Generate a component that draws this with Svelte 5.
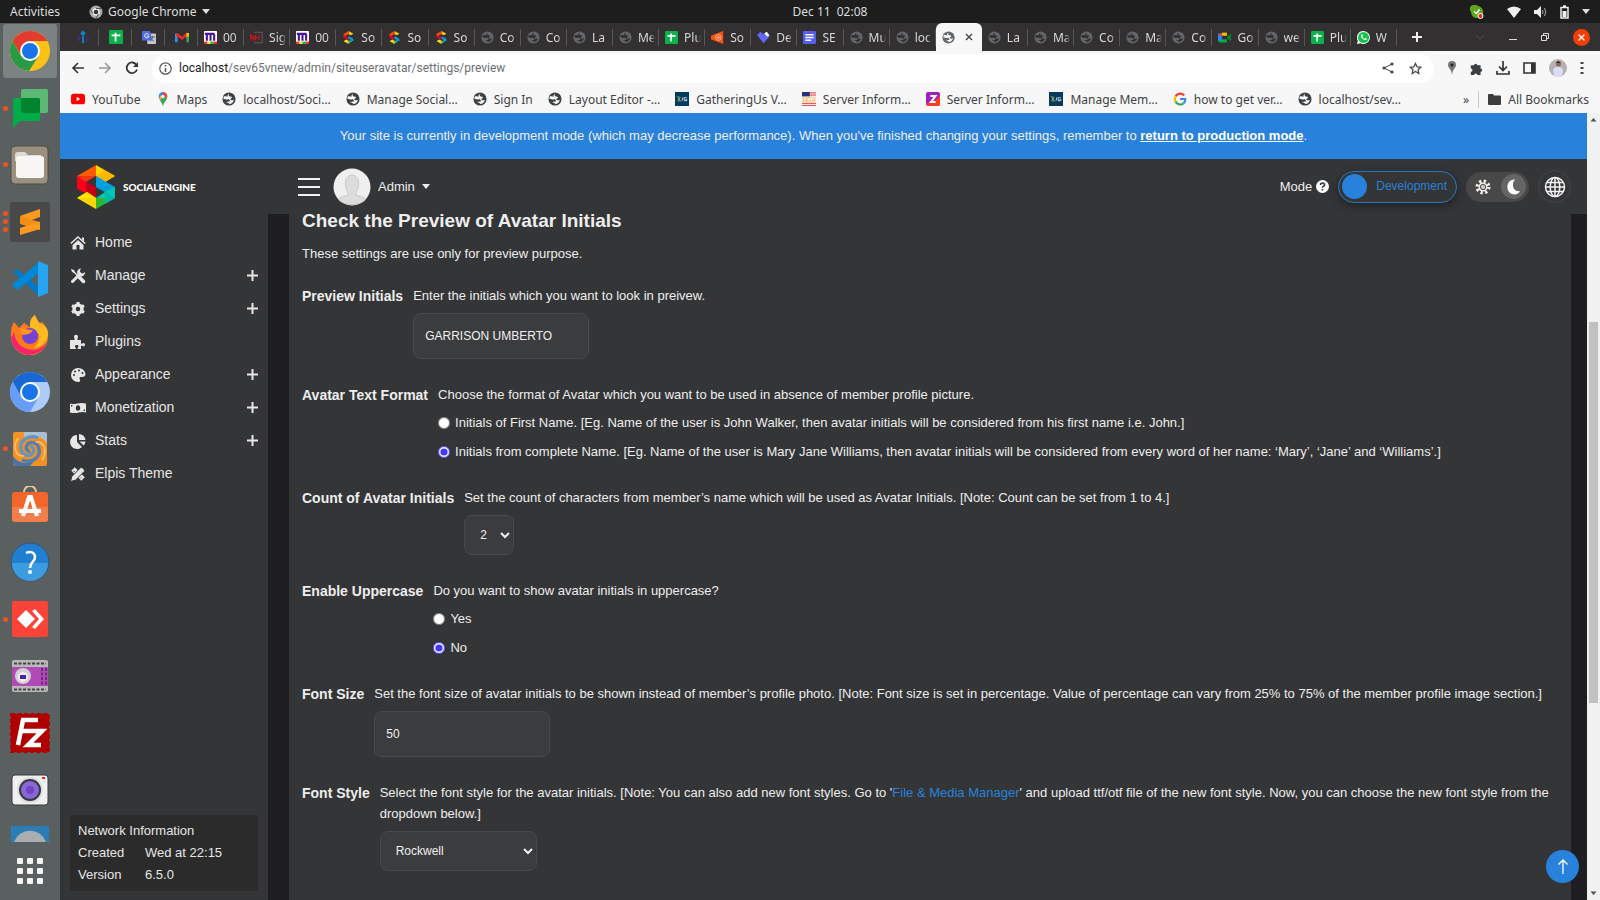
<script>
  const pinned = ["arrows", "sheets", "translate", "gmail"];
  const tabs = [
    { icon: "monday", title: "00" },
    { icon: "nh", title: "Sig" },
    { icon: "monday", title: "00" },
    { icon: "se", title: "So" },
    { icon: "se", title: "So" },
    { icon: "se", title: "So" },
    { icon: "globe", title: "Co" },
    { icon: "globe", title: "Co" },
    { icon: "globe", title: "La" },
    { icon: "globe", title: "Me" },
    { icon: "sheets", title: "Plu" },
    { icon: "orange", title: "So" },
    { icon: "heart", title: "De" },
    { icon: "docs", title: "SE" },
    { icon: "globe", title: "Mu" },
    { icon: "globe", title: "loc" },
    { icon: "globe", title: "", active: true },
    { icon: "globe", title: "La" },
    { icon: "globe", title: "Ma" },
    { icon: "globe", title: "Co" },
    { icon: "globe", title: "Ma" },
    { icon: "globe", title: "Co" },
    { icon: "meet", title: "Go" },
    { icon: "globe", title: "we" },
    { icon: "sheets", title: "Plu" },
    { icon: "whatsapp", title: "W" },
  ];
  const bookmarks = [
    { icon: "youtube", title: "YouTube" },
    { icon: "maps", title: "Maps" },
    { icon: "globe", title: "localhost/Soci…" },
    { icon: "globe", title: "Manage Social…" },
    { icon: "globe", title: "Sign In" },
    { icon: "globe", title: "Layout Editor -…" },
    { icon: "gathering", title: "GatheringUs V…" },
    { icon: "php", title: "Server Inform…" },
    { icon: "zend", title: "Server Inform…" },
    { icon: "gathering", title: "Manage Mem…" },
    { icon: "google", title: "how to get ver…" },
    { icon: "globe", title: "localhost/sev…" },
  ];
  const dock = [
    { icon: "chrome", label: "Google Chrome", dots: 2, active: true },
    { icon: "chat", label: "Chat", dots: 1 },
    { icon: "files", label: "Files", dots: 1 },
    { icon: "sublime", label: "Sublime Text", dots: 3 },
    { icon: "code", label: "Visual Studio Code", dots: 0 },
    { icon: "firefox", label: "Firefox", dots: 0 },
    { icon: "chromium", label: "Chromium", dots: 0 },
    { icon: "swirl", label: "Meld", dots: 1 },
    { icon: "software", label: "Ubuntu Software", dots: 0 },
    { icon: "help", label: "Help", dots: 0 },
    { icon: "anydesk", label: "AnyDesk", dots: 1 },
    { icon: "recorder", label: "Screen Recorder", dots: 0 },
    { icon: "filezilla", label: "FileZilla", dots: 0 },
    { icon: "camera", label: "Camera", dots: 0 },
  ];
  const menu = [
    { icon: "home", label: "Home" },
    { icon: "tools", label: "Manage", more: true },
    { icon: "gear", label: "Settings", more: true },
    { icon: "puzzle", label: "Plugins" },
    { icon: "palette", label: "Appearance", more: true },
    { icon: "money", label: "Monetization", more: true },
    { icon: "pie", label: "Stats", more: true },
    { icon: "pencil", label: "Elpis Theme" },
  ];

  let initials = $state("GARRISON UMBERTO");
  let format = $state("full");
  let count = $state("2");
  let uppercase = $state("no");
  let fontSize = $state("50");
  let fontStyle = $state("Rockwell");
</script>

{#snippet favicon(name)}
  <svg class="favicon" viewBox="0 0 16 16" aria-hidden="true">
    {#if name === "globe"}
      <circle cx="8" cy="8" r="7.5" fill="currentColor" />
      <path class="land" d="M2 5.200c1.200-.6 3.500-.6 4.800.2 1.600 1 1.800 2.800-.2 3.200C4.500 9 4 7.800 1.800 8c-.2-1 0-2 .2-2.800zM8.500 2.200c-1 .9-1.300 1.900-.2 2.600 1.300.8 2.600.1 3 1.300.4 1.300-1.700 1.200-1.700 2.300 0 1.500 2.300 1 4 .6C13 11.500 11 13.800 7.800 13.800c.8-1.500-.8-1.700-3.300-2.200 2-.8 5-.4 4.800-1.600-.2-.9-1.600-.9-1.500-2.300.1-1.300-1.300-2.200-1.600-3.200-.2-.9.900-1.900 2.300-2.300z" />
    {:else if name === "arrows"}
      <path d="M8 15V3M5.500 5L8 1.800 10.500 5" fill="none" stroke="#1b80c4" stroke-width="2" />
      <path d="M5 6v8L1 10.500V9zM11 6v8l4-3.500V9z" fill="#3b2f78" />
    {:else if name === "sheets"}
      <rect width="16" height="16" rx="1.500" fill="#0db14b" />
      <path d="M3 6h10M7.500 3v10" stroke="#fff" stroke-width="2" />
    {:else if name === "translate"}
      <rect x="6" y="4" width="10" height="12" rx="1" fill="#c5c8ce" />
      <path d="M9 8h6M12 7v1c0 2-1.500 4-3 5m1-4c1 2 2.500 3.500 4 4" stroke="#556" stroke-width="1" fill="none" />
      <path d="M1 1h8l3 11H1a1 1 0 0 1-1-1V2a1 1 0 0 1 1-1z" fill="#4f6be0" />
      <path d="M7.500 5A2.500 2.500 0 1 0 8 7H5.500" stroke="#fff" fill="none" />
    {:else if name === "gmail"}
      <path d="M1.500 14V4" stroke="#4285f4" stroke-width="3" />
      <path d="M14.500 14V4" stroke="#34a853" stroke-width="3" />
      <path d="M1.500 4.500L8 9.500l6.500-5" stroke="#ea2a1f" stroke-width="3.200" fill="none" />
      <path d="M13 3.500h3v3l-3 2z" fill="#fbbc04" />
    {:else if name === "monday"}
      <rect width="16" height="16" rx="1" fill="#fff" />
      <path d="M3.500 12V4M8 12V4M12.500 12V4M1 3.500h12" stroke="#4b159b" stroke-width="2.600" />
      <path d="M0 13h4v3H0z" fill="#e33" /><path d="M4 13h4v3H4z" fill="#fd2" />
      <path d="M8 13h4v3H8z" fill="#1b4" /><path d="M12 13h4v3h-4z" fill="#e33" />
    {:else if name === "nh"}
      <path d="M5 1.500h10v13H5" fill="none" stroke="#666" />
      <path d="M1 11V5l4 6V5M7 5v6M7 8h4M11 5v6" fill="none" stroke="#c6171d" stroke-width="1.500" />
    {:else if name === "se"}
      <path d="M8 0l6 3.500-3 1.800L8 4z" fill="#fc0" /><path d="M8 0L2 3.500v4L8 4z" fill="#f44a10" />
      <path d="M2 5l6 3v3.500L2 8z" fill="#e4002b" /><path d="M8 6l6 3.500v3L8 9.500z" fill="#009fe3" />
      <path d="M14 11l-6 5v-4z" fill="#1eb9a4" /><path d="M2 12.500l3-2 3 1.500v4z" fill="#fd0" />
    {:else if name === "orange"}
      <path d="M15 0v16L2 11a3 3 0 0 1 0-6z" fill="#f9500c" />
      <circle cx="9" cy="8" r="3.500" fill="none" stroke="#ffd6bd" /><path d="M7 8h4M9 6.500v3" stroke="#ffd6bd" />
    {:else if name === "heart"}
      <path d="M0 5l4-4 4 3 3-3 5 5-8 9z" fill="#6167f5" /><path d="M9 3l3-2 3 4-2 2z" fill="#fff" />
    {:else if name === "docs"}
      <rect width="16" height="16" rx="1.500" fill="#5561ee" />
      <path d="M3 4.500h10M3 8h10M3 11.500h7" stroke="#fff" stroke-width="1.800" />
    {:else if name === "meet"}
      <path d="M0 3h5v10H0z" fill="#2684fc" /><path d="M5 2h6v4H5z" fill="#ffba00" />
      <path d="M0 6l5-4v4z" fill="#ea4335" /><path d="M5 10h6v4H2l-2-2z" fill="#00ac47" />
      <path d="M5 6h6v4H5z" fill="#323030" /><path d="M11 7l5-4v10l-5-4z" fill="#00832d" />
    {:else if name === "whatsapp"}
      <path d="M8 0a8 8 0 1 1-4 15L0 16l1-4A8 8 0 0 1 8 0z" fill="#fff" />
      <circle cx="8" cy="8" r="6.800" fill="#19c251" />
      <path d="M5 4.500c-1 3 3.500 7.500 6.500 6.500l.5-1.500-2-1-1 1C8 9 7 8 6.700 7l.8-1-1-2z" fill="#fff" />
    {:else if name === "youtube"}
      <rect y="2" width="16" height="12" rx="3" fill="#f00" /><path d="M6.500 5.500v5l4-2.500z" fill="#fff" />
    {:else if name === "maps"}
      <path d="M8 16C7 11 3 9 3 5a5 5 0 0 1 5-5v5z" fill="#4285f4" />
      <path d="M8 0a5 5 0 0 1 5 5L8 8z" fill="#ea4335" />
      <path d="M13 5c0 4-4 6-5 11-.5-3-2-4.500-3.300-6.500z" fill="#34a853" />
      <path d="M3.500 7L6 3.500l1 3-2.300 3z" fill="#fbbc04" /><circle cx="8" cy="5" r="1.800" fill="#fff" />
    {:else if name === "gathering"}
      <rect width="16" height="16" fill="#063a5c" />
      <path d="M2.500 5l4 6M2.500 10l4-4M4.500 4.500v7" stroke="#b8c66a" stroke-width=".8" fill="none" />
      <path d="M8 10l1-4M13.500 6.500h-3v3.500h3V8.500H12" stroke="#d4e2e8" fill="none" />
    {:else if name === "php"}
      <rect width="16" height="16" fill="#f3e9e4" /><path d="M0 0h9v5H0z" fill="#2a2f7c" />
      <path d="M9 1h7M9 3.500h7M0 13h16M0 15.500h16" stroke="#d33" />
      <path d="M1 6h14v5H1z" fill="#f0c87c" /><path d="M3 10V7h2M7 7v3M9 7v3M7 8.500h2M11 10V7h2v2" stroke="#fff" fill="none" />
    {:else if name === "zend"}
      <rect width="16" height="16" rx="3" fill="#f43a26" /><path d="M3 0h10a3 3 0 0 1 3 3v4L0 13V3a3 3 0 0 1 3-3z" fill="#a01fc0" />
      <path d="M16 4v9a3 3 0 0 1-3 3H5z" fill="#f93d23" />
      <path d="M5 4.500h6l-5.500 7H11" stroke="#fff" stroke-width="2.200" fill="none" />
    {:else if name === "google"}
      <path d="M12.800 4A6 6 0 0 0 3 5" stroke="#ea4335" stroke-width="2.500" fill="none" />
      <path d="M3 5a6 6 0 0 0 0 6" stroke="#fbbc05" stroke-width="2.500" fill="none" />
      <path d="M3 11a6 6 0 0 0 9 2" stroke="#34a853" stroke-width="2.500" fill="none" />
      <path d="M12 13c1.500-1.300 2.200-3 2-5H8" stroke="#4285f4" stroke-width="2.500" fill="none" />
    {/if}
  </svg>
{/snippet}

{#snippet dockIcon(name)}
  <svg class="dock-icon" viewBox="0 0 40 40" aria-hidden="true">
    {#if name === "chrome"}
      <circle cx="20" cy="20" r="20" fill="#fbc116" />
      <path d="M2.700 10A20 20 0 0 1 37.300 10H20l-8.700 15z" fill="#e33b2e" />
      <path d="M2.700 10A20 20 0 0 0 19 40l9.700-15-8.700 4-9-4z" fill="#2b9a47" />
      <circle cx="20" cy="20" r="10" fill="#fff" /><circle cx="20" cy="20" r="8" fill="#1a73e8" />
    {:else if name === "chat"}
      <rect x="11" y="1" width="27" height="24" rx="2" fill="#5bb974" />
      <path d="M4 10h24a2 2 0 0 1 2 2v19a2 2 0 0 1-2 2H10l-7 7V12z" fill="#00ac47" />
      <path d="M11 10h17a2 2 0 0 1 2 2v13H13a2 2 0 0 1-2-2z" fill="#00832d" />
    {:else if name === "files"}
      <rect x="1" y="1" width="37" height="38" rx="4" fill="#9a9080" stroke="#514c43" />
      <path d="M5 10a3 3 0 0 1 3-3h7l3 3h13v6H5z" fill="#dedbd4" />
      <rect x="6" y="11" width="28" height="22" rx="3" fill="#f8f7f5" />
    {:else if name === "sublime"}
      <rect width="40" height="40" rx="2" fill="#494949" />
      <path d="M10 14l20-7v8l-11 4z" fill="#ff9a1f" />
      <path d="M10 14v8l20 6v-8l-11-3z" fill="#f48d16" />
      <path d="M30 20v7l-20 6v-7l12-4z" fill="#ff9a1f" />
    {:else if name === "code"}
      <path d="M3 13l4-3 22 18v9z" fill="#0078c8" /><path d="M29 3v11L7 31l-4-3v-3z" fill="#0088d8" />
      <path d="M28 2l10 4v28l-10 4z" fill="#27a5f2" />
    {:else if name === "firefox"}
      <path d="M4 7l5 6 5-5 6 4 4-12c3 2 4 6 5 8l3-1c4 4 7 9 6 15A18.500 18.500 0 0 1 1 22c0-6 0-10 3-15z" fill="#ff7a1c" />
      <path d="M25 0c-5 3-5 7-5 12l9 7c1 6-1 10-5 14 8-1 14-7 14-14S33 9 31 9c-3-2-5-5-6-9z" fill="#fdbb22" />
      <path d="M1 23a18.500 18.500 0 0 0 36 4c-5 8-13 9-20 7S5 26 4 17z" fill="#f4236d" />
      <circle cx="20" cy="21" r="8" fill="#7543d3" /><path d="M10 13c5 1 8 2 13 2-3 5-6 4-11 5z" fill="#ff961c" />
    {:else if name === "chromium"}
      <circle cx="20" cy="20" r="20" fill="#aecbfa" />
      <path d="M2.700 10A20 20 0 0 1 37.300 10H20L11.300 25z" fill="#1967d2" />
      <path d="M2.700 10A20 20 0 0 0 20 40l8.700-15-8.700 4-9-4z" fill="#669df6" />
      <circle cx="20" cy="20" r="10" fill="#fff" /><circle cx="20" cy="20" r="8" fill="#1a73e8" />
    {:else if name === "swirl"}
      <rect x="3" y="3" width="34" height="34" rx="2" fill="#f39224" />
      <path d="M14 3h20a3 3 0 0 1 3 3v8C31 6 20 4 14 11z" fill="#a9bfd6" />
      <path d="M3 27c6 9 16 8 22 4l-5 6H6a3 3 0 0 1-3-3z" fill="#4a73a8" />
      <path d="M28 9C18 5 9 12 11 20c1 7 9 8 12 4 2-3 0-7-3-6" fill="none" stroke="#6c93ba" stroke-width="3.500" />
      <path d="M12 31c10 4 19-3 17-11-1-7-9-8-12-4-2 3 0 7 3 6" fill="none" stroke="#567fae" stroke-width="3.500" />
      <path d="M8 9C2 18 6 28 14 27M32 31c6-9 2-19-6-18" fill="none" stroke="#ffc37a" stroke-width="1.500" />
    {:else if name === "software"}
      <path d="M14 8V6a6 6 0 0 1 12 0v2" fill="none" stroke="#e5c99a" stroke-width="2" />
      <rect x="2" y="6" width="36" height="30" rx="3" fill="#f2652b" />
      <path d="M2 21h36v12a3 3 0 0 1-3 3H5a3 3 0 0 1-3-3z" fill="#f47e4b" />
      <path d="M9 25h22M13 30l6-19h2l6 19" fill="none" stroke="#fff" stroke-width="4" />
    {:else if name === "help"}
      <circle cx="20" cy="20" r="19" fill="#207fd0" stroke="#33536d" />
      <path d="M2 21h36a18 18 0 0 1-36 0z" fill="#3d9be0" />
      <path d="M16 11c4-2 9-1 9 4s-5 5-5 11" fill="none" stroke="#fff" stroke-width="2.500" /><circle cx="20" cy="30" r="2" fill="#fff" />
    {:else if name === "anydesk"}
      <rect x="2" y="2" width="36" height="36" rx="2" fill="#fc4338" />
      <path d="M7 20l9-9 9 9-9 9z" fill="#fff" /><path d="M22 12l3-2 9 10-9 10-3-2 7-8z" fill="#fff" />
    {:else if name === "recorder"}
      <rect x="2" y="4" width="36" height="32" rx="2" fill="#b9b9b9" />
      <path d="M2 11h36v19H2z" fill="#b04ab6" /><path d="M4 7.500h32M4 33.500h32" stroke="#444" stroke-width="2" stroke-dasharray="3 1.500" />
      <path d="M32 12v18M36 12v18" stroke="#6c2c76" stroke-width="2" stroke-dasharray="3 1.500" />
      <circle cx="13" cy="20" r="8" fill="#cfcfd2" /><circle cx="13" cy="21" r="5" fill="#eee" /><path d="M10 19h6v4h-6z" fill="#4a20a5" />
    {:else if name === "filezilla"}
      <rect x="1" y="1" width="38" height="38" fill="#b10000" stroke="#b10000" stroke-width="2.500" stroke-dasharray="4 2.500" />
      <path d="M8 32l5-25h15M11 18h11M19 18h13L18 32h13" fill="none" stroke="#fff" stroke-width="4.500" />
    {:else if name === "camera"}
      <rect x="2" y="5" width="36" height="30" rx="3" fill="#f1f0f0" stroke="#3a3a3a" />
      <circle cx="20" cy="20" r="13" fill="#dedede" /><circle cx="20" cy="20" r="11" fill="#383842" />
      <circle cx="20" cy="20" r="9" fill="#8768d6" /><circle cx="20" cy="20" r="4" fill="#7442c4" /><path d="M32 7h3v2h-3z" fill="#e23" />
    {/if}
  </svg>
{/snippet}

{#snippet menuIcon(name)}
  <svg class="menu-icon" viewBox="0 0 16 16" aria-hidden="true">
    {#if name === "home"}
      <path d="M.8 8.500L8 2l7.200 6.500" fill="none" stroke="currentColor" stroke-width="1.600" />
      <path d="M12 2.500h2v4l-2-2zM8 5l5.500 5v4.500h-4V10h-3v4.500h-4V10z" fill="currentColor" />
    {:else if name === "tools"}
      <path d="M1 1l3 1 1 2 3.500 3.500-1 1L4 5 2 4zM9 8l6 5-2 2-5-6z" fill="currentColor" />
      <path d="M9.500 9.500l4 4" stroke="currentColor" stroke-width="3.500" stroke-linecap="round" />
      <path d="M2.500 13.500L10 6" stroke="currentColor" stroke-width="3" stroke-linecap="round" />
      <path d="M15 4a4 4 0 1 1-4-3.500L9.800 3 11 5l2 .5z" fill="currentColor" />
    {:else if name === "gear"}
      <circle cx="8" cy="8" r="4" fill="none" stroke="currentColor" stroke-width="3.400" />
      <path d="M8 1v2.500M8 12.500V15M2 4.500l2 1.200M12 10.300l2 1.200M2 11.500l2-1.200M12 5.700l2-1.200" stroke="currentColor" stroke-width="3.200" />
    {:else if name === "puzzle"}
      <path d="M0 6h4.500C5 4.500 4 4 4 2.800a2 2 0 0 1 4 0C8 4 7 4.500 7.500 6H11v3.500c1.500.5 2-.5 3-.5a2 2 0 0 1 0 3.500c-1 0-1.500-1-3-.5v3H7.500c0-1.500 1-1.500 1-2.800 0-1.500-3.500-1.500-3.500 0 0 1.300 1 1.300 1 2.800H0z" fill="currentColor" />
    {:else if name === "palette"}
      <path fill-rule="evenodd" d="M8 1a7 7 0 0 1 7.500 6c0 3-3 3-4.500 3-2 0-1.500 2-1 3 .5 1.500-.5 2-2 2A7 7 0 0 1 8 1zM3 8a1 1 0 1 0 2 0 1 1 0 0 0-2 0zm1-3.500a1 1 0 1 0 2 0 1 1 0 0 0-2 0zM8 3.500a1 1 0 1 0 2 0 1 1 0 0 0-2 0zm3.500 2.500a1 1 0 1 0 2 0 1 1 0 0 0-2 0z" fill="currentColor" />
    {:else if name === "money"}
      <path d="M0 3.500c5 2 9-2 16 0v9c-5-2-9 2-16 0z" fill="currentColor" />
      <ellipse cx="8" cy="8" rx="2.200" ry="2.800" fill="#343537" /><path d="M1 5v2l2-1.500zM15 11V9l-2 1.500z" fill="#343537" />
    {:else if name === "pie"}
      <path d="M7 2v7l5 5A7 7 0 1 1 7 2z" fill="currentColor" /><path d="M9 1a6.500 6.500 0 0 1 6.500 6H9z" fill="currentColor" /><path d="M9.500 8.500h6a6 6 0 0 1-2 4z" fill="currentColor" />
    {:else if name === "pencil"}
      <path d="M3 3l10 10" stroke="currentColor" stroke-width="5" />
      <path d="M3.500 6l1-1M10 12.500l1-1" stroke="#343537" />
      <path d="M.5 15.500l1.300-5L10.500 1.800c1.300-1.300 5 2.400 3.700 3.700L5.500 14.200z" fill="currentColor" stroke="#343537" />
    {/if}
  </svg>
{/snippet}

<div class="desktop">
  <header class="topbar">
    <div class="top-left">
      <span>Activities</span>
      <span class="app-name">
        <svg width="14" height="14" viewBox="0 0 14 14"><circle cx="7" cy="7" r="6.500" fill="#aaa" /><circle cx="7" cy="7" r="3" fill="#333" stroke="#eee" stroke-width="1.500" /><path d="M7 3.500h6M4 8.500L1 4M9.500 9L7 13" stroke="#555" /></svg>
        Google Chrome
        <i class="caret"></i>
      </span>
    </div>
    <span class="clock">Dec 11&ensp;02:08</span>
    <div class="top-right">
      <svg width="14" height="14" viewBox="0 0 14 14"><path d="M4 0a4 4 0 0 1 4 1 6 6 0 0 1 5 7 4 4 0 0 1-5 5 6 6 0 0 1-7-6 4 4 0 0 1 3-7z" fill="#5da61b" /><path d="M4 6.500l2.500 2 3-4" stroke="#fff" stroke-width="1.500" fill="none" /><circle cx="10.500" cy="11" r="2.500" fill="#e22" stroke="#fff" /></svg>
      <svg class="wifi" width="14" height="12" viewBox="0 0 14 12"><path d="M0 3q7-5 14 0L7 12z" fill="#eee" /></svg>
      <svg width="13" height="12" viewBox="0 0 13 12"><path d="M0 4h3l4-4v12L3 8H0z" fill="#eee" /><path d="M8.500 4q1 2 0 4M10.500 2q2.500 4 0 8" fill="none" stroke="#aaa" /></svg>
      <svg width="9" height="14" viewBox="0 0 9 14"><path d="M1 2.500h7v10.500H1zM3 1h3" fill="none" stroke="#eee" stroke-width="1.500" /><path d="M2.500 6h4v6h-4z" fill="#eee" /></svg>
      <i class="caret"></i>
    </div>
  </header>

  <div class="workspace">
    <nav class="dock" aria-label="Dock">
      <div class="dock-list">
        {#each dock as app}
          <button class="dock-item" class:active={app.active} aria-label={app.label}>
            <span class="dots">
              {#each Array(app.dots) as _}<i></i>{/each}
            </span>
            <span class="tile">{@render dockIcon(app.icon)}</span>
          </button>
        {/each}
      </div>
      <svg class="dock-cut" width="40" height="16" viewBox="0 0 40 16"><path d="M1 0h38v16H1z" fill="#2b7db5" /><path d="M4 16a17 17 0 0 1 32 0z" fill="#a9afb1" /></svg>
      <button class="apps" aria-label="Show Applications">
        {#each Array(9) as _}<i></i>{/each}
      </button>
    </nav>

    <div class="browser">
      <div class="tabstrip">
        <div class="pinned">
          {#each pinned as name}<span class="pin">{@render favicon(name)}</span>{/each}
        </div>
        <div class="tabs">
          {#each tabs as tab}
            <div class="tab" class:active={tab.active}>
              {@render favicon(tab.icon)}
              {#if tab.active}
                <svg class="close" width="8" height="8" viewBox="0 0 8 8"><path d="M1 1l6 6M7 1L1 7" stroke="#444" stroke-width="1.400" /></svg>
              {:else}
                <span class="tab-title">{tab.title}</span>
              {/if}
            </div>
          {/each}
        </div>
        <div class="window-tools">
          <svg width="12" height="12" viewBox="0 0 12 12"><path d="M6 1v10M1 6h10" stroke="#eee" stroke-width="2" /></svg>
          <div class="window-buttons">
            <svg width="10" height="10" viewBox="0 0 10 10"><path d="M1 3l4 4 4-4" stroke="#4b4949" fill="none" /></svg>
            <svg width="8" height="10" viewBox="0 0 8 10"><path d="M0 7.500h8" stroke="#ddd" /></svg>
            <svg width="8" height="8" viewBox="0 0 8 8"><path d="M.5 2.500h5v5h-5zM2.500 2.500v-2h5v5h-2" stroke="#ddd" fill="none" /></svg>
            <svg width="17" height="17" viewBox="0 0 17 17"><circle cx="8.500" cy="8.500" r="8.500" fill="#f33d05" /><path d="M5.500 5.500l6 6M11.500 5.500l-6 6" stroke="#fff" stroke-width="1.300" /></svg>
          </div>
        </div>
      </div>

      <div class="toolbar">
        <svg width="14" height="14" viewBox="0 0 14 14"><path d="M13 7H2M7 2L2 7l5 5" fill="none" stroke="#333" stroke-width="1.600" /></svg>
        <svg width="14" height="14" viewBox="0 0 14 14"><path d="M1 7h11M7 2l5 5-5 5" fill="none" stroke="#999" stroke-width="1.600" /></svg>
        <svg width="14" height="14" viewBox="0 0 14 14"><path d="M11.500 4A5.300 5.300 0 1 0 12 8.500" fill="none" stroke="#333" stroke-width="1.800" /><path d="M13 1v5H8z" fill="#333" /></svg>
        <div class="address">
          <svg width="13" height="13" viewBox="0 0 13 13"><circle cx="6.500" cy="6.500" r="5.700" fill="none" stroke="#555" stroke-width="1.200" /><path d="M6.500 6v4M6.500 3v1.500" stroke="#555" stroke-width="1.500" /></svg>
          <span class="url"><b>localhost</b>/sev65vnew/admin/siteuseravatar/settings/preview</span>
          <svg width="12" height="12" viewBox="0 0 12 12"><path d="M10 2L2 6l8 4" fill="none" stroke="#444" /><circle cx="10" cy="2" r="1.600" fill="#444" /><circle cx="2" cy="6" r="1.600" fill="#444" /><circle cx="10" cy="10" r="1.600" fill="#444" /></svg>
          <svg class="star" width="13" height="13" viewBox="0 0 14 14"><path d="M7 1.500l1.700 3.700 4 .4-3 2.700.9 4L7 10.200l-3.600 2.100.9-4-3-2.700 4-.4z" fill="none" stroke="#444" stroke-width="1.300" /></svg>
        </div>
        <div class="extensions">
          <svg width="10" height="14" viewBox="0 0 10 14"><path d="M5 0a4 4 0 0 1 4 4c0 3-3.500 4-4 10C4.500 8 1 7 1 4a4 4 0 0 1 4-4z" fill="#777" /><circle cx="5" cy="4" r="1.500" fill="#222" /></svg>
          <svg width="13" height="13" viewBox="0 0 16 16"><path d="M1 4h4a2 2 0 1 1 4 0h4v4a2 2 0 1 1 0 4v4H9a2 2 0 1 0-4 0H1v-4a2 2 0 1 0 0-4z" fill="#3c3f42" /></svg>
          <svg width="14" height="14" viewBox="0 0 14 14"><path d="M7 0v9M3 5.500L7 9.500l4-4M1 10v3h12v-3" fill="none" stroke="#333" stroke-width="1.700" /></svg>
          <svg width="13" height="12" viewBox="0 0 13 12"><path d="M1 1h11v10H1z" fill="none" stroke="#333" stroke-width="1.600" /><path d="M8 1h4v10H8z" fill="#333" /></svg>
          <svg width="18" height="18" viewBox="0 0 18 18"><circle cx="9" cy="9" r="9" fill="#b5b1b2" /><path d="M5 17l-1-5q0-4 5-4t5 4l-1 5q-4 2-8 0z" fill="#dcdcf7" /><circle cx="9.500" cy="5" r="2.500" fill="#8b6a55" /><path d="M7 4q2-4 5 0z" fill="#332b2b" /></svg>
          <svg width="4" height="14" viewBox="0 0 4 14"><path d="M.5 1h3v2h-3zM.5 6h3v2h-3zM.5 11h3v2h-3z" fill="#444" /></svg>
        </div>
      </div>

      <div class="bookmarks">
        {#each bookmarks as mark}
          <a class="bookmark" href="#top">{@render favicon(mark.icon)}{mark.title}</a>
        {/each}
        <div class="all-bookmarks">
          <span class="more">»</span>
          <a class="bookmark" href="#all"><svg width="13" height="11" viewBox="0 0 13 11"><path d="M0 1q0-1 1-1h4l1 1.500h6q1 0 1 1V10q0 1-1 1H1q-1 0-1-1z" fill="#3c3c3c" /></svg>All Bookmarks</a>
        </div>
      </div>

      <div class="viewport">
        <div class="site" id="top">
          <p class="notice">
            Your site is currently in development mode (which may decrease performance). When you've finished changing your settings, remember to <a href="#production">return to production mode</a>.
          </p>
          <header class="site-header">
            <div class="brand">
              <svg width="38" height="44" viewBox="0 0 38 44">
                <path d="M19 0v11L0 11z" fill="#ff5a00" /><path d="M19 0l19 11-10 6-9-6z" fill="#ffd500" /><path d="M19 11l9-5.500L38 11l-10 6z" fill="#ffb800" />
                <path d="M0 11h19L9 17v10L0 22z" fill="#f4330f" /><path d="M0 11l9 6 10 16L0 24z" fill="#fb0016" /><path d="M9 17l10 5v11l-10-6z" fill="#c40019" />
                <path d="M19 11l19 11v11L19 22z" fill="#00a0e3" /><path d="M19 22l19 0v11l-10-6z" fill="#009fd1" /><path d="M38 22v11l-19 0 9-6z" fill="#00c6b5" />
                <path d="M38 33L19 44V33z" fill="#2eb72e" /><path d="M28 27l10 6-10 6z" fill="#00b9a8" /><path d="M0 33l10-6 9 6v11z" fill="#ffd500" /><path d="M0 33h19L10 27z" fill="#ffe400" />
              </svg>
              <strong>SOCIALENGINE</strong>
            </div>
            <button class="burger" aria-label="Toggle menu"><i></i><i></i><i></i></button>
            <button class="account">
              <svg width="38" height="38" viewBox="0 0 38 38"><circle cx="19" cy="19" r="18.500" fill="#efefef" /><path d="M6 32c1-4 5-3 9-5v-3c-4-4-4-17 4-17s8 13 4 17v3c4 2 8 1 9 5-7 6-19 6-26 0z" fill="#dcdcdc" stroke="#c9c9c9" /></svg>
              Admin
              <i class="caret"></i>
            </button>
            <div class="header-tools">
              <span class="mode">Mode
                <svg width="13" height="13" viewBox="0 0 13 13"><circle cx="6.500" cy="6.500" r="6.500" fill="#fff" /><path d="M4.500 5c0-3 4.300-2.300 4 0-.2 1.200-2 1.200-2 2.800M6.500 9v1.500" stroke="#343537" stroke-width="1.600" fill="none" /></svg>
              </span>
              <button class="mode-switch"><i></i>Development</button>
              <div class="theme">
                <svg width="16" height="16" viewBox="0 0 16 16"><circle cx="8" cy="8" r="5.500" fill="none" stroke="#f1ece3" stroke-width="4" stroke-dasharray="2.160" /><circle cx="8" cy="8" r="4.500" fill="#f1ece3" /><circle cx="8" cy="8" r="2.700" fill="#c5c5c5" stroke="#555" stroke-width="1" /></svg>
                <span class="moon"><svg width="16" height="16" viewBox="0 0 16 16"><path d="M9 .5C0 0-1.500 13 7 15.300c3 .6 6-.8 7-3.300-7 1.500-9-7-5-11.500z" fill="#fff" /></svg></span>
              </div>
              <button class="language" aria-label="Language">
                <svg width="22" height="22" viewBox="0 0 22 22"><g fill="none" stroke="#f2f2f2" stroke-width="1.500"><circle cx="11" cy="11" r="9.500" /><ellipse cx="11" cy="11" rx="4.800" ry="9.500" /><path d="M11 1.500v19M1.500 11h19M3 6.500h16M3 15.500h16" /></g></svg>
              </button>
            </div>
          </header>

          <div class="site-body">
            <aside class="sidebar">
              <nav>
                {#each menu as item}
                  <a href="#menu">
                    {@render menuIcon(item.icon)}
                    <span>{item.label}</span>
                    {#if item.more}
                      <svg width="11" height="11" viewBox="0 0 11 11"><path d="M5.500 0v11M0 5.500h11" stroke="currentColor" stroke-width="2" /></svg>
                    {/if}
                  </a>
                {/each}
              </nav>
              <dl class="network">
                <div>Network Information</div>
                <dt>Created</dt><dd>Wed at 22:15</dd>
                <dt>Version</dt><dd>6.5.0</dd>
              </dl>
            </aside>

            <main>
              <form class="card">
                <h1>Check the Preview of Avatar Initials</h1>
                <p class="lead">These settings are use only for preview purpose.</p>

                <div class="row">
                  <label class="name" for="initials">Preview Initials</label>
                  <div class="field">
                    <p>Enter the initials which you want to look in preivew.</p>
                    <input id="initials" type="text" bind:value={initials} />
                  </div>
                </div>

                <div class="row">
                  <span class="name" id="format-label">Avatar Text Format</span>
                  <div class="field" role="radiogroup" aria-labelledby="format-label">
                    <p>Choose the format of Avatar which you want to be used in absence of member profile picture.</p>
                    <div class="options">
                      <label><input type="radio" value="first" bind:group={format} />Initials of First Name. [Eg. Name of the user is John Walker, then avatar initials will be considered from his first name i.e. John.]</label>
                      <label><input type="radio" value="full" bind:group={format} />Initials from complete Name. [Eg. Name of the user is Mary Jane Williams, then avatar initials will be considered from every word of her name: ‘Mary’, ‘Jane’ and ‘Williams’.]</label>
                    </div>
                  </div>
                </div>

                <div class="row">
                  <label class="name" for="count">Count of Avatar Initials</label>
                  <div class="field">
                    <p>Set the count of characters from member’s name which will be used as Avatar Initials. [Note: Count can be set from 1 to 4.]</p>
                    <select id="count" bind:value={count}>
                      <option>1</option>
                      <option>2</option>
                      <option>3</option>
                      <option>4</option>
                    </select>
                  </div>
                </div>

                <div class="row">
                  <span class="name" id="upper-label">Enable Uppercase</span>
                  <div class="field" role="radiogroup" aria-labelledby="upper-label">
                    <p>Do you want to show avatar initials in uppercase?</p>
                    <div class="options">
                      <label><input type="radio" value="yes" bind:group={uppercase} />Yes</label>
                      <label><input type="radio" value="no" bind:group={uppercase} />No</label>
                    </div>
                  </div>
                </div>

                <div class="row">
                  <label class="name" for="size">Font Size</label>
                  <div class="field">
                    <p>Set the font size of avatar initials to be shown instead of member’s profile photo. [Note: Font size is set in percentage. Value of percentage can vary from 25% to 75% of the member profile image section.]</p>
                    <input id="size" type="text" bind:value={fontSize} />
                  </div>
                </div>

                <div class="row">
                  <label class="name" for="style">Font Style</label>
                  <div class="field">
                    <p>Select the font style for the avatar initials. [Note: You can also add new font styles. Go to '<a href="#files">File &amp; Media Manager</a>' and upload ttf/otf file of the new font style. Now, you can choose the new font style from the dropdown below.]</p>
                    <select id="style" class="wide" bind:value={fontStyle}>
                      <option>Rockwell</option>
                    </select>
                  </div>
                </div>
              </form>
            </main>
          </div>
          <button class="to-top" aria-label="Back to top">
            <svg width="12" height="16" viewBox="0 0 12 16"><path d="M6 15V1M1.500 5.500L6 1l4.500 4.500" fill="none" stroke="#fff" stroke-width="1.300" /></svg>
          </button>
        </div>
        <div class="scrollbar">
          <svg width="9" height="14" viewBox="0 0 9 14"><path d="M1.500 8.500h6l-3-3.500z" fill="#505050" /></svg>
          <i class="before"></i>
          <i class="thumb"></i>
          <i class="after"></i>
          <svg width="9" height="14" viewBox="0 0 9 14"><path d="M1.500 5.500h6l-3 3.500z" fill="#505050" /></svg>
        </div>
      </div>
    </div>
  </div>
</div>

<style>
  :global(body) {
    overflow: hidden;
  }

  .desktop {
    height: 100vh;
    display: flex;
    flex-direction: column;
    font: 12px "Noto Sans", "Open Sans", sans-serif;
  }

  .desktop :global(*) {
    box-sizing: border-box;
  }

  svg {
    flex: none;
    display: block;
  }

  button {
    padding: 0;
    border: 0;
    background: none;
    color: inherit;
    font: inherit;
  }

  a {
    color: inherit;
    text-decoration: none;
  }

  .caret {
    border: 4px solid transparent;
    border-top: 5px solid currentColor;
    border-bottom: 0;
  }

  .topbar {
    flex: none;
    height: 23px;
    padding: 0 10px;
    display: grid;
    grid-template-columns: 1fr auto 1fr;
    align-items: center;
    background: #1d1d1d;
    color: #dedede;
  }

  .top-left,
  .top-right,
  .app-name {
    display: flex;
    align-items: center;
  }

  .top-left {
    gap: 29px;
  }

  .app-name {
    gap: 5px;
  }

  .clock {
    padding-left: 60px;
  }

  .top-right {
    justify-content: flex-end;
    gap: 13px;
  }

  .wifi {
    margin-left: 10px;
  }

  .workspace {
    flex: 1;
    min-height: 0;
    display: flex;
  }

  .dock {
    flex: none;
    width: 60px;
    display: flex;
    flex-direction: column;
    align-items: center;
    background: #5a6060;
  }

  .dock-list {
    flex: 1;
    width: 100%;
    display: flex;
    flex-direction: column;
  }

  .dock-item {
    flex: 1;
    display: flex;
    align-items: center;
  }

  .dots {
    width: 3px;
    display: grid;
    gap: 3px;
  }

  .dots i {
    width: 5px;
    height: 5px;
    margin-left: 3px;
    border-radius: 50%;
    background: #ef5420;
  }

  .tile {
    width: 54px;
    height: 54px;
    display: grid;
    place-items: center;
    border-radius: 3px;
  }

  .active .tile {
    background: #7c8282;
  }

  .dock-icon {
    width: 40px;
    height: 40px;
  }

  .dock-cut {
    margin: 8px 0 16px;
  }

  .apps {
    display: grid;
    grid-template-columns: repeat(3, 6px);
    gap: 4px;
    margin-bottom: 16px;
  }

  .apps i {
    height: 6px;
    border-radius: 1px;
    background: #f3f3f3;
  }

  .browser {
    flex: 1;
    min-width: 0;
    display: flex;
    flex-direction: column;
    background: #f7f7f7;
    color: #3f4245;
  }

  .tabstrip {
    flex: none;
    height: 28px;
    padding-left: 6px;
    display: flex;
    background: #323030;
    color: #d8d8d8;
  }

  .pinned,
  .tabs {
    display: flex;
    align-items: stretch;
  }

  .tabs {
    flex: 1;
    min-width: 0;
  }

  .pin {
    position: relative;
    width: 33px;
    display: grid;
    place-items: center;
  }

  .tab {
    position: relative;
    flex: 1;
    min-width: 0;
    padding: 0 4px 0 6px;
    display: flex;
    align-items: center;
    gap: 6px;
  }

  .pin::after,
  .tab::after {
    content: "";
    position: absolute;
    right: 0;
    top: 6px;
    width: 1px;
    height: 17px;
    background: #575555;
  }

  .tab.active {
    border-radius: 6px 6px 0 0;
    background: #f7f7f7;
  }

  .tab.active::after {
    display: none;
  }

  .close {
    margin-left: 4px;
  }

  .tab-title {
    flex: 1;
    overflow: hidden;
    white-space: nowrap;
    mask-image: linear-gradient(90deg, #000 70%, transparent);
  }

  .favicon {
    width: 14px;
    height: 14px;
  }

  .tab .favicon {
    width: 13px;
    height: 13px;
    color: #63666a;
  }

  .land {
    fill: #323030;
  }

  .tab.active .land,
  .bookmark .land {
    fill: #f7f7f7;
  }

  .window-tools {
    width: 203px;
    padding: 0 10px 0 14px;
    display: flex;
    justify-content: space-between;
    align-items: center;
  }

  .window-buttons {
    display: flex;
    align-items: center;
    gap: 24px;
  }

  .toolbar {
    flex: none;
    height: 34px;
    padding: 0 16px 0 11px;
    display: flex;
    align-items: center;
    gap: 13px;
  }

  .address {
    flex: 1;
    height: 29px;
    padding: 0 12px 0 7px;
    display: flex;
    align-items: center;
    gap: 7px;
    border-radius: 15px;
    background: #fff;
  }

  .url {
    flex: 1;
    color: #6d7073;
    font-family: Roboto, sans-serif;
  }

  .url b {
    font-weight: 400;
    color: #202124;
  }

  .star {
    margin-left: 8px;
  }

  .extensions {
    display: flex;
    align-items: center;
    gap: 13px;
  }

  .bookmarks {
    flex: none;
    height: 28px;
    padding: 0 11px;
    display: flex;
    align-items: center;
    gap: 15px;
  }

  .bookmark {
    display: flex;
    align-items: center;
    gap: 7px;
    white-space: nowrap;
  }

  .all-bookmarks {
    margin-left: auto;
    display: flex;
    align-items: center;
  }

  .more {
    margin-right: 9px;
  }

  .all-bookmarks .bookmark {
    padding-left: 9px;
    border-left: 1px solid #c9c9c9;
  }

  .viewport {
    flex: 1;
    min-height: 0;
    display: flex;
  }

  .site {
    position: relative;
    flex: 1;
    min-width: 0;
    display: flex;
    flex-direction: column;
    background: #1e1d22;
    color: #eee;
    font: 13px/21px "Liberation Sans", Arial, sans-serif;
  }

  .notice {
    flex: none;
    margin: 0;
    padding: 12px 20px 13px;
    background: #2881da;
    text-align: center;
  }

  .notice a {
    color: #fff;
    font-weight: 700;
    text-decoration: underline;
  }

  .site-header {
    flex: none;
    height: 55px;
    padding: 0 16px;
    display: flex;
    align-items: center;
    background: #343537;
  }

  .brand {
    width: 222px;
    padding-left: 1px;
    display: flex;
    align-items: center;
    gap: 8px;
    color: #fff;
    font: 700 10px Lato, sans-serif;
  }

  .burger {
    width: 22px;
    margin-right: 13px;
    display: grid;
    gap: 6px;
  }

  .burger i {
    height: 2px;
    background: #f0f0f0;
  }

  .account {
    display: flex;
    align-items: center;
    gap: 7px;
  }

  .header-tools {
    margin-left: auto;
    display: flex;
    align-items: center;
    gap: 9px;
  }

  .mode {
    display: flex;
    align-items: center;
    gap: 4px;
  }

  .mode-switch {
    height: 32px;
    padding: 0 9px 0 3px;
    display: flex;
    align-items: center;
    gap: 9px;
    border: 1px solid #2775be;
    border-radius: 16px;
    box-shadow: 0 3px 8px #222;
    color: #2a80d3;
    font-size: 12px;
  }

  .mode-switch i {
    width: 25px;
    height: 25px;
    border-radius: 50%;
    background: #2881da;
  }

  .theme {
    height: 30px;
    padding: 0 3px 0 9px;
    display: flex;
    align-items: center;
    gap: 10px;
    border-radius: 15px;
    background: #484848;
  }

  .moon,
  .language {
    display: grid;
    place-items: center;
    border-radius: 50%;
  }

  .moon {
    width: 25px;
    height: 25px;
    background: #656565;
  }

  .language {
    width: 33px;
    height: 33px;
    border: 1px solid #444547;
  }

  .site-body {
    flex: 1;
    min-height: 0;
    display: flex;
  }

  .sidebar {
    flex: none;
    width: 208px;
    padding: 12px 10px 9px;
    display: flex;
    flex-direction: column;
    justify-content: space-between;
    background: #343537;
    color: #e6e6e6;
  }

  .sidebar a {
    height: 33px;
    display: flex;
    align-items: center;
    gap: 9px;
    font-size: 14px;
  }

  .sidebar a span {
    flex: 1;
  }

  .menu-icon {
    width: 16px;
    height: 16px;
  }

  .network {
    margin: 0;
    padding: 5px 8px;
    display: grid;
    grid-template-columns: 67px 1fr;
    line-height: 22px;
    border-radius: 4px;
    background: #2b2b2b;
  }

  .network div {
    grid-column: 1 / 3;
  }

  .network dd {
    margin: 0;
  }

  main {
    flex: 1;
    min-width: 0;
    padding: 0 16px 0 21px;
    overflow: hidden;
  }

  .card {
    min-height: 100%;
    padding: 0 12px 30px 13px;
    background: #343537;
  }

  h1 {
    margin: 0 0 15px;
    font-size: 19px;
    line-height: 14px;
  }

  p {
    margin: 0;
  }

  .lead {
    margin-bottom: 21px;
  }

  .row {
    display: flex;
    gap: 10px;
    margin-bottom: 25px;
  }

  .name {
    flex: none;
    font-size: 14px;
    font-weight: 700;
    line-height: 22px;
  }

  .field {
    flex: 1;
    min-width: 0;
  }

  .field p {
    margin-bottom: 7px;
  }

  .field p a {
    color: #2881da;
  }

  input[type="text"],
  select {
    display: block;
    border: 1px solid #48494b;
    border-radius: 8px;
    background: #3b3c3e;
    color: #f0f0f0;
    font: 12px "Liberation Sans", Arial, sans-serif;
  }

  input[type="text"] {
    width: 176px;
    height: 46px;
    padding: 0 11px;
  }

  select {
    width: 50px;
    height: 40px;
    padding: 0 0 0 11px;
  }

  select.wide {
    width: 157px;
  }

  .options {
    display: grid;
    justify-items: start;
    gap: 8px;
  }

  .options label {
    display: flex;
    align-items: center;
    gap: 5px;
  }

  input[type="radio"] {
    width: 12px;
    height: 12px;
    margin: 0;
    accent-color: #4338ff;
  }

  .to-top {
    position: absolute;
    right: 8px;
    bottom: 17px;
    width: 33px;
    height: 33px;
    display: grid;
    place-items: center;
    border-radius: 50%;
    background: #2881da;
  }

  .scrollbar {
    flex: none;
    width: 13px;
    display: flex;
    flex-direction: column;
    align-items: center;
    background: #f1f1f1;
  }

  .before {
    flex: 195;
  }

  .thumb {
    flex: 381;
    width: 9px;
    background: #c1c1c1;
  }

  .after {
    flex: 183;
  }
</style>
